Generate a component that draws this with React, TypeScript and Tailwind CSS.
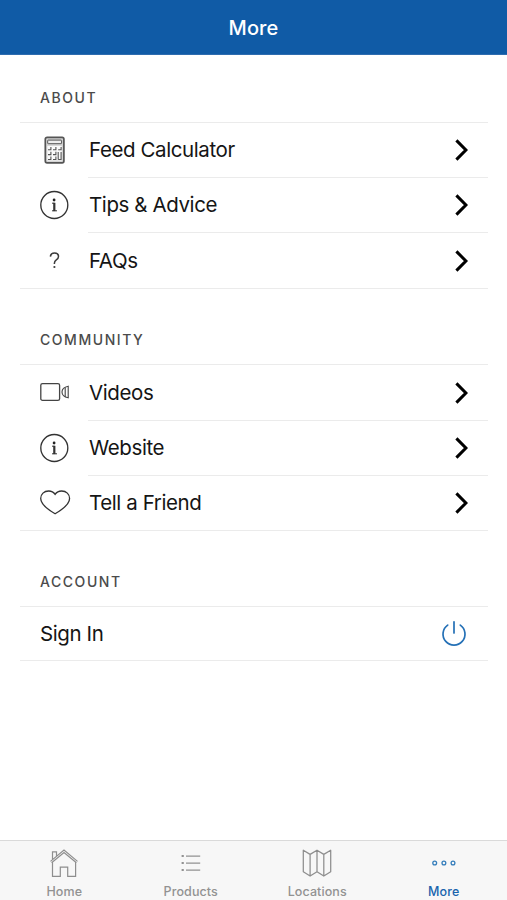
import type { ReactNode } from 'react';

const Calculator = () => (
  <svg width="30" height="30" viewBox="0 0 30 30" fill="none" stroke="#555">
    <rect x="5.3" y="2.4" width="18.6" height="25.4" rx="1.8" strokeWidth="1.7" fill="#d4d4d4" />
    <rect x="7.7" y="5.1" width="13.9" height="3.6" rx="0.5" fill="#eee" strokeWidth="1" />
    <path
      d="M7.3 10.9h14.4v14.6H7.3z"
      fill="#fafafa"
      stroke="none"
    />
    <path
      d="M8 14.8h2.9v-2.9M13 14.8h2.9v-2.9M18.2 14.8h2.9v-2.9M8 19.6h2.9v-2.9M13 19.6h2.9v-2.9M8 24.5h2.9v-2.9M13 24.5h2.9v-2.9M18.2 24.5h2.9v-7.4M18.2 16.9v7.6"
      strokeWidth="1.1"
    />
  </svg>
);

const Info = () => (
  <svg width="30" height="30" viewBox="0 0 30 30" fill="none" stroke="#333">
    <circle cx="14.3" cy="15" r="13.5" strokeWidth="1.35" />
    <circle cx="14.1" cy="10" r="1.4" fill="#222" stroke="none" />
    <path d="M12 13.2h2.5v7.5M12 20.8h5" strokeWidth="1" />
    <path d="M14.3 12.8v8.3" strokeWidth="2.2" />
  </svg>
);

const Question = () => (
  <svg width="30" height="30" viewBox="0 0 30 30" fill="none" stroke="#3c3c3c" strokeWidth="1.5">
    <path d="M10.4 11.6c.2-2.2 1.8-3.5 4.1-3.5 2.4 0 4 1.3 4 3.4 0 1.6-.9 2.5-2.2 3.4-1.4 1-1.9 1.7-1.9 3.4v.8" />
    <circle cx="14.4" cy="22" r="1.1" fill="#3c3c3c" stroke="none" />
  </svg>
);

const Video = () => (
  <svg width="30" height="30" viewBox="0 0 30 30" fill="none" stroke="#444" strokeWidth="1.3">
    <rect x="0.8" y="6.6" width="18.8" height="16.8" rx="1.7" />
    <path d="M28.2 9.2v11.6c-3.1-.6-6.2-1.5-6.2-5.8s3.1-5.2 6.2-5.8ZM25.2 10.4v9.2" strokeWidth="1.1" />
  </svg>
);

const Heart = () => (
  <svg width="32" height="30" viewBox="0 0 32 30" fill="none" stroke="#333" strokeWidth="1.3">
    <path d="M15.1 7.3C13.6 5.1 11.4 4 8.7 4 4 4 .7 7.1.7 11.5c0 5.6 5.7 10.2 14.4 15.3 8.7-5.1 14.5-9.7 14.5-15.3C29.6 7.1 26.3 4 21.6 4c-2.7 0-5 1.1-6.5 3.3Z" />
  </svg>
);

const Chevron = () => (
  <svg width="14" height="22" viewBox="0 0 14 22" fill="none" stroke="#000" strokeWidth="3">
    <path d="m1.4 1.4 9.5 9.6-9.5 9.6" />
  </svg>
);

const Power = () => (
  <svg width="26" height="26" viewBox="0 0 26 26" fill="none" stroke="#2470b6" strokeWidth="1.7" strokeLinecap="round">
    <path d="M13 1.8v11.2M6.7 5.1a11 11 0 1 0 12.6 0" />
  </svg>
);

const Home = () => (
  <svg width="30" height="30" viewBox="0 0 30 30" fill="none" stroke="#8e8e8e" strokeWidth="1.2">
    <path d="M1.5 13.4 15 2.1l13.5 11.3M2.6 14.8 15 4.5l12.4 10.3M3.5 14v14.3h7.8v-9.2h7.4v9.2h7.9V14M3.5 11.2V3.9h4v3.9" />
  </svg>
);

const Products = () => (
  <svg width="30" height="30" viewBox="0 0 30 30" fill="none" stroke="#929292" strokeWidth="1.3">
    <path d="M10 8.1h14.2M10 15.1h14.2M10 22.1h14.2" />
    <path d="M5.6 8.1h2.2M5.6 15.1h2.2M5.6 22.1h2.2" strokeWidth="2" />
  </svg>
);

const Map = () => (
  <svg width="30" height="30" viewBox="0 0 30 30" fill="none" stroke="#8e8e8e" strokeWidth="1.25" strokeLinejoin="round">
    <path d="M1.3 2.2 8.1 6.4 15 2.2l6.8 4.2 6.9-4.2v21.5l-6.9 4.3-6.8-4.3L8.1 28l-6.8-4.3ZM8.1 6.4V28M15 2.2v21.5M21.8 6.4V28" />
  </svg>
);

const Dots = () => (
  <svg width="30" height="30" viewBox="0 0 30 30" fill="none" stroke="#347dbb" strokeWidth="1.3">
    <circle cx="5.7" cy="15" r="1.9" />
    <circle cx="14.9" cy="15" r="1.9" />
    <circle cx="24" cy="15" r="1.9" />
  </svg>
);

const Heading = ({ first, children }: { first?: boolean; children: ReactNode }) => (
  <h2
    className={`flex items-end border-b border-[#ebebeb] pb-[15px] pl-5 text-[14px] leading-[18px] font-medium tracking-[1.55px] text-[#4b4b4b] ${
      first ? 'h-[68px]' : 'h-[76px]'
    }`}
  >
    {children}
  </h2>
);

type RowProps = { icon: ReactNode; label: string; height: string; last?: boolean };

const Row = ({ icon, label, height, last }: RowProps) => (
  <li className={`flex pl-5 ${height} ${last ? 'border-b border-[#ebebeb]' : ''}`}>
    <span className="flex w-12 shrink-0 items-center pb-[2px]">{icon}</span>
    <span className={`flex flex-1 items-center justify-between pr-[19px] pl-[1px] ${last ? '' : 'border-b border-[#ebebeb]'}`}>
      <span className="text-[20.5px] leading-6 tracking-[-0.4px] text-[#151515]">{label}</span>
      <Chevron />
    </span>
  </li>
);

const Tab = ({ icon, label, active }: { icon: ReactNode; label: string; active?: boolean }) => (
  <div className={`flex flex-1 flex-col items-center pt-[7px] ${active ? 'text-[#1964ad]' : 'text-[#929292]'}`}>
    {icon}
    <span className="mt-[6px] text-[12.5px] leading-4 font-medium tracking-[0.1px]">{label}</span>
  </div>
);

export default function App() {
  return (
    <div className="flex h-[900px] w-full flex-col overflow-hidden bg-white font-['Inter','Liberation_Sans',sans-serif]">
      <header className="flex h-[55px] shrink-0 items-center justify-center border-b border-[#2e6caf] bg-[#105ba6]">
        <h1 className="pt-px text-[20px] leading-6 font-medium tracking-[0.1px] text-white">More</h1>
      </header>
      <main className="flex-1 pr-[19px] pl-5">
        <Heading first>ABOUT</Heading>
        <ul>
          <Row icon={<Calculator />} label="Feed Calculator" height="h-[55px]" />
          <Row icon={<Info />} label="Tips & Advice" height="h-[55px]" />
          <Row icon={<Question />} label="FAQs" height="h-14" last />
        </ul>
        <Heading>COMMUNITY</Heading>
        <ul>
          <Row icon={<Video />} label="Videos" height="h-14" />
          <Row icon={<Info />} label="Website" height="h-[55px]" />
          <Row icon={<Heart />} label="Tell a Friend" height="h-[55px]" last />
        </ul>
        <Heading>ACCOUNT</Heading>
        <div className="flex h-[54px] items-center justify-between border-b border-[#ebebeb] pr-[21px] pl-5">
          <span className="text-[20.5px] leading-6 tracking-[-0.4px] text-[#151515]">Sign In</span>
          <span className="pb-[2px]">
            <Power />
          </span>
        </div>
      </main>
      <nav className="flex h-[60px] shrink-0 border-t border-[#dadada] bg-[#f7f7f7] pl-px">
        <Tab icon={<Home />} label="Home" />
        <Tab icon={<Products />} label="Products" />
        <Tab icon={<Map />} label="Locations" />
        <Tab icon={<Dots />} label="More" active />
      </nav>
    </div>
  );
}
